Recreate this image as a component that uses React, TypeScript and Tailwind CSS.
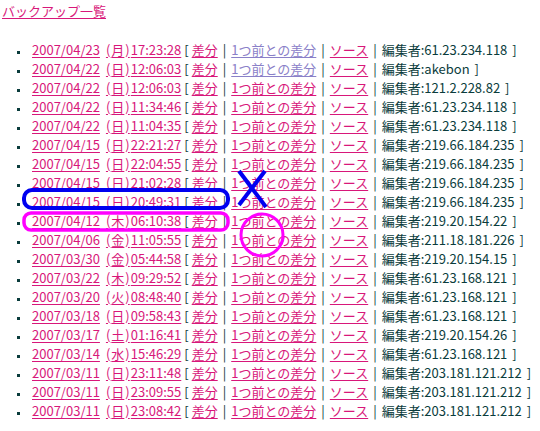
import React from 'react';

interface Backup {
    day: string;
    wd: string;
    time: string;
    editor: string;
    visited?: boolean;
}

const backups: Backup[] = [
    { day: '2007/04/23', wd: '月', time: '17:23:28', editor: '61.23.234.118', visited: true },
    { day: '2007/04/22', wd: '日', time: '12:06:03', editor: 'akebon', visited: true },
    { day: '2007/04/22', wd: '日', time: '12:06:03', editor: '121.2.228.82' },
    { day: '2007/04/22', wd: '日', time: '11:34:46', editor: '61.23.234.118' },
    { day: '2007/04/22', wd: '日', time: '11:04:35', editor: '61.23.234.118' },
    { day: '2007/04/15', wd: '日', time: '22:21:27', editor: '219.66.184.235' },
    { day: '2007/04/15', wd: '日', time: '22:04:55', editor: '219.66.184.235' },
    { day: '2007/04/15', wd: '日', time: '21:02:28', editor: '219.66.184.235' },
    { day: '2007/04/15', wd: '日', time: '20:49:31', editor: '219.66.184.235' },
    { day: '2007/04/12', wd: '木', time: '06:10:38', editor: '219.20.154.22' },
    { day: '2007/04/06', wd: '金', time: '11:05:55', editor: '211.18.181.226' },
    { day: '2007/03/30', wd: '金', time: '05:44:58', editor: '219.20.154.15' },
    { day: '2007/03/22', wd: '木', time: '09:29:52', editor: '61.23.168.121' },
    { day: '2007/03/20', wd: '火', time: '08:48:40', editor: '61.23.168.121' },
    { day: '2007/03/18', wd: '日', time: '09:58:43', editor: '61.23.168.121' },
    { day: '2007/03/17', wd: '土', time: '01:16:41', editor: '219.20.154.26' },
    { day: '2007/03/14', wd: '水', time: '15:46:29', editor: '61.23.168.121' },
    { day: '2007/03/11', wd: '日', time: '23:11:48', editor: '203.181.121.212' },
    { day: '2007/03/11', wd: '日', time: '23:09:55', editor: '203.181.121.212' },
    { day: '2007/03/11', wd: '日', time: '23:08:42', editor: '203.181.121.212' },
];

const link = 'text-[#d8177a] underline underline-offset-[2px]';

export default function App() {
    return (
        <div
            className="relative w-[540px] h-[431px] bg-white text-[#0a3c3c] text-[13px] leading-[19px] overflow-hidden"
            style={{ fontFamily: '"Noto Sans CJK JP", "Noto Sans", sans-serif' }}
        >
            <div className="pl-[2px] pt-[1px]">
                <a href="#" className={link}>バックアップ一覧</a>
            </div>

            <ul className="mt-[20px] pl-[17px]">
                {backups.map((b, i) => (
                    <li key={i} className="flex items-center h-[19px] whitespace-nowrap">
                        <span className="w-[3px] h-[3px] bg-[#0a3c3c] mt-[5px] mr-[12px] shrink-0" />
                        <a href="#" className={link}>
                            {b.day}
                            <span className="ml-[6px]">(</span>
                            <span className="ml-[1px]">{b.wd}</span>
                            <span className="ml-[1px] mr-[1px]">)</span>
                            {b.time}
                        </a>
                        <span className="mx-[3px]">[</span>
                        <a href="#" className={link}>差分</a>
                        <span className="mx-[5px]">|</span>
                        <a href="#" className={b.visited ? 'text-[#8a80c8] underline underline-offset-[2px]' : link}>1つ前との差分</a>
                        <span className="mx-[5px]">|</span>
                        <a href="#" className={link}>ソース</a>
                        <span className="mx-[5px]">|</span>
                        <span>編集者:{b.editor}</span>
                        <span className="ml-[5px]">]</span>
                    </li>
                ))}
            </ul>

            {/* hand-drawn markup over the list */}
            <svg className="absolute inset-0 pointer-events-none" width="540" height="431" viewBox="0 0 540 431">
                <rect x="24" y="190" width="204" height="18" rx="8" fill="none" stroke="#0000f0" strokeWidth="4" />
                <line x1="239" y1="171" x2="266" y2="207" stroke="#0000f0" strokeWidth="4" />
                <line x1="265" y1="171" x2="239" y2="205" stroke="#0000f0" strokeWidth="4" />
                <rect x="24" y="213" width="204" height="17" rx="7" fill="none" stroke="#ff00ff" strokeWidth="3.5" />
                <ellipse cx="262" cy="235" rx="21" ry="21" fill="none" stroke="#ff00ff" strokeWidth="3" />
            </svg>
        </div>
    );
}
